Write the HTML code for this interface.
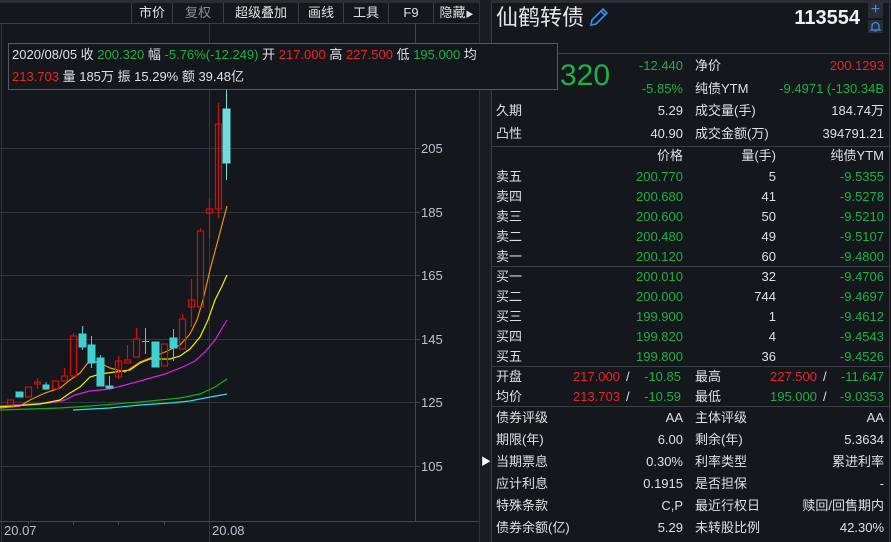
<!DOCTYPE html>
<html><head><meta charset="utf-8"><style>
*{margin:0;padding:0;box-sizing:border-box}
body{width:891px;height:542px;background:#14171c;overflow:hidden;position:relative;font-family:"Liberation Sans","Noto Sans CJK SC",sans-serif;color:#d8d8d8;font-size:13px}
.a{position:absolute;white-space:nowrap;line-height:16px}
.g{color:#1fb04a}.r{color:#e8262d}.w{color:#e0e0e0}
.R{text-align:right}
.hl{position:absolute;height:1px;background:#3a3d43}
.tb{position:absolute;top:3px;height:20px;border-left:1px solid #3a3d43;text-align:center;line-height:20px;font-size:13px;color:#e0e0e0}
</style></head><body>
<!-- top strip -->
<div style="position:absolute;left:0;top:0;width:891px;height:3px;background:#2a2d33"></div>
<div class="hl" style="left:0;top:23px;width:479px"></div>
<div class="tb" style="left:131px;width:41px">市价</div>
<div class="tb" style="left:172px;width:51px;color:#8a8d92">复权</div>
<div class="tb" style="left:223px;width:75px">超级叠加</div>
<div class="tb" style="left:298px;width:45px">画线</div>
<div class="tb" style="left:343px;width:45px">工具</div>
<div class="tb" style="left:388px;width:45px">F9</div>
<div class="tb" style="left:433px;width:46px">隐藏<span style="font-size:8px">▶</span></div>

<!-- chart -->
<svg style="position:absolute;left:0;top:0" width="480" height="542">
<g stroke="#33363c" stroke-width="1">
<line x1="0" y1="148.5" x2="415" y2="148.5"/><line x1="0" y1="212.5" x2="415" y2="212.5"/><line x1="0" y1="275.5" x2="415" y2="275.5"/><line x1="0" y1="339.5" x2="415" y2="339.5"/><line x1="0" y1="402.5" x2="415" y2="402.5"/><line x1="0" y1="466.5" x2="415" y2="466.5"/>
<line x1="209.5" y1="24" x2="209.5" y2="542"/>
<line x1="1.5" y1="24" x2="1.5" y2="542"/>
</g>
<g stroke="#44474d"><line x1="415.5" y1="24" x2="415.5" y2="521"/><line x1="0" y1="521.5" x2="479" y2="521.5"/>
<line x1="415" y1="148.5" x2="420" y2="148.5"/><line x1="415" y1="212.5" x2="420" y2="212.5"/><line x1="415" y1="275.5" x2="420" y2="275.5"/><line x1="415" y1="339.5" x2="420" y2="339.5"/><line x1="415" y1="402.5" x2="420" y2="402.5"/><line x1="415" y1="466.5" x2="420" y2="466.5"/>
<line x1="28.5" y1="521" x2="28.5" y2="525"/><line x1="73.5" y1="521" x2="73.5" y2="525"/><line x1="118.5" y1="521" x2="118.5" y2="525"/><line x1="164.5" y1="521" x2="164.5" y2="525"/></g>
<g fill="#b8c4d0" font-size="13" font-family="Liberation Sans,sans-serif">
<text x="421" y="153">205</text><text x="421" y="217">185</text><text x="421" y="280">165</text><text x="421" y="344">145</text><text x="421" y="407">125</text><text x="421" y="471">105</text>
<text x="4" y="535">20.07</text><text x="212" y="535">20.08</text></g>
<!-- MAs -->
<g fill="none" stroke-width="1.2">
<polyline stroke="#26e0e8" points="73,410 110,408 140,405 170,403 190,401 205,398 227,394"/>
<polyline stroke="#10b010" points="0,410 60,408 90,406 140,402 180,398 200,394 215,387 227,379"/>
<polyline stroke="#e020e0" points="0,406 50,403 65,400 75,395 90,391 110,389 140,381 165,374 185,366 195,361 205,352 215,340 227,320"/>
<polyline stroke="#f0f000" points="0,407 40,404 60,400 70,393 80,387 90,377 100,374 115,372 130,370 140,363 150,359 170,359 180,356 190,349 200,337 208,320 215,300 222,286 227,275"/>
<polyline stroke="#f09010" points="0,408 20,406 30,400 45,393 60,388 70,380 80,373 90,360 100,363 110,368 125,372 140,362 150,358 165,352 180,345 190,334 197,320 203,300 210,270 218,240 227,206"/>
</g>
<!-- candles -->
<g stroke="#d01010" fill="none" stroke-width="1.2">
<rect x="7.5" y="400" width="6" height="5"/>
<rect x="25.5" y="387" width="6" height="10"/>
<rect x="34.5" y="382" width="6" height="2"/><line x1="37.5" y1="378" x2="37.5" y2="389"/>
<rect x="52.5" y="381" width="6" height="8"/>
<rect x="61.5" y="376" width="6" height="5"/><line x1="64.5" y1="368" x2="64.5" y2="376"/>
<rect x="70.5" y="336" width="6" height="40"/><line x1="73.5" y1="333" x2="73.5" y2="336"/>
<rect x="115.5" y="361" width="6" height="16"/><line x1="118.5" y1="356" x2="118.5" y2="379"/>
<rect x="124.5" y="360" width="6" height="3"/><line x1="127.5" y1="345" x2="127.5" y2="360"/>
<rect x="133.5" y="339" width="6" height="18"/><line x1="136.5" y1="328" x2="136.5" y2="339"/>
<rect x="161.5" y="344" width="6" height="22"/>
<rect x="179.5" y="319" width="6" height="30"/><line x1="182.5" y1="314" x2="182.5" y2="319"/>
<rect x="188.5" y="300" width="6" height="7"/><line x1="191.5" y1="279" x2="191.5" y2="327"/>
<rect x="197.5" y="231" width="6" height="76"/><line x1="200.5" y1="228" x2="200.5" y2="231"/>
<rect x="206.5" y="209" width="6" height="4"/><line x1="209.5" y1="199" x2="209.5" y2="239"/>
<rect x="215.5" y="124" width="6" height="85"/><line x1="218.5" y1="103" x2="218.5" y2="218"/>
</g>
<g fill="#40d0d0" stroke="#40d0d0">
<rect x="16" y="392" width="7" height="5"/>
<rect x="43" y="385" width="6" height="4"/><line x1="46" y1="382" x2="46" y2="390"/>
<rect x="79" y="334" width="7" height="13"/><line x1="82.5" y1="326" x2="82.5" y2="350"/>
<rect x="88" y="345" width="7" height="18"/><line x1="91.5" y1="336" x2="91.5" y2="368"/>
<rect x="97" y="358" width="7" height="28"/><line x1="100.5" y1="355" x2="100.5" y2="358"/>
<rect x="106" y="386" width="7" height="2"/><line x1="109.5" y1="376" x2="109.5" y2="389"/>
<line x1="142" y1="341.5" x2="149" y2="341.5"/><line x1="145.5" y1="328" x2="145.5" y2="354"/>
<rect x="152" y="342" width="7" height="25"/>
<rect x="170" y="338" width="7" height="10"/><line x1="173.5" y1="329" x2="173.5" y2="361"/>
<rect x="223" y="109" width="7" height="54" fill="#70dcdc" stroke="#70dcdc"/><line x1="226.5" y1="88" x2="226.5" y2="180" stroke="#70dcdc"/>
</g>
</svg>

<!-- divider strip -->
<div style="position:absolute;left:479px;top:0;width:12px;height:542px;background:#1a1d22;border-left:1px solid #2e3137"></div>
<div class="a" style="left:481px;top:455px;font-size:10px;color:#fff">▶</div>

<!-- right panel -->
<div style="position:absolute;left:491px;top:3px;width:1px;height:539px;background:#3a3d43"></div>
<div style="position:absolute;left:889px;top:3px;width:1px;height:539px;background:#3a3d43"></div>
<div class="a" style="left:496px;top:4px;font-size:22px;line-height:28px;color:#e6e6e6">仙鹤转债</div>
<svg style="position:absolute;left:588px;top:6px" width="22" height="22" viewBox="0 0 22 22"><path d="M3 19 L4 14 L15 3 L19 7 L8 18 Z M13 5 L17 9" fill="none" stroke="#3c8ef0" stroke-width="1.6"/></svg>
<div class="a" style="left:760px;top:6px;width:100px;text-align:right;font-size:20px;line-height:24px;font-weight:bold;color:#f0f0f0">113554</div>
<div style="position:absolute;left:868px;top:3px;width:15px;height:15px;background:#2a2d33;color:#3c8ef0;font-size:16px;line-height:14px;text-align:center">+</div>
<div style="position:absolute;left:868px;top:20px;width:15px;height:13px;background:#2a2d33"><svg width="15" height="13"><path d="M3 10 L4 9 L4 5 Q7.5 0 11 5 L11 9 L12 10 Z M6.5 11 L8.5 11" fill="none" stroke="#3c8ef0" stroke-width="1.2"/></svg></div>

<div class="hl" style="left:491px;top:53px;width:398px"></div>
<div class="a" style="left:560px;top:58px;font-size:30px;line-height:36px" ><span class="g">320</span></div>
<div class="a g R" style="left:600px;top:58px;width:83px">-12.440</div>
<div class="a w" style="left:695px;top:58px">净价</div>
<div class="a r R" style="left:780px;top:58px;width:104px">200.1293</div>
<div class="a g R" style="left:600px;top:81px;width:83px">-5.85%</div>
<div class="a w" style="left:695px;top:81px">纯债YTM</div>
<div class="a g R" style="left:760px;top:81px;width:124px;overflow:hidden">-9.4971 (-130.34B</div>
<div class="a w" style="left:496px;top:103px">久期</div><div class="a w R" style="left:600px;top:103px;width:83px">5.29</div>
<div class="a w" style="left:695px;top:103px">成交量(手)</div><div class="a w R" style="left:780px;top:103px;width:104px">184.74万</div>
<div class="a w" style="left:496px;top:126px">凸性</div><div class="a w R" style="left:600px;top:126px;width:83px">40.90</div>
<div class="a w" style="left:695px;top:126px">成交金额(万)</div><div class="a w R" style="left:780px;top:126px;width:104px">394791.21</div>
<div class="hl" style="left:491px;top:146px;width:398px"></div>
<div class="a w R" style="left:600px;top:148px;width:83px">价格</div>
<div class="a w R" style="left:700px;top:148px;width:76px">量(手)</div>
<div class="a w R" style="left:780px;top:148px;width:104px">纯债YTM</div>

<div class="a w" style="left:496px;top:169px">卖五</div><div class="a g R" style="left:600px;top:169px;width:83px">200.770</div><div class="a w R" style="left:700px;top:169px;width:76px">5</div><div class="a g R" style="left:780px;top:169px;width:104px">-9.5355</div>
<div class="a w" style="left:496px;top:189px">卖四</div><div class="a g R" style="left:600px;top:189px;width:83px">200.680</div><div class="a w R" style="left:700px;top:189px;width:76px">41</div><div class="a g R" style="left:780px;top:189px;width:104px">-9.5278</div>
<div class="a w" style="left:496px;top:209px">卖三</div><div class="a g R" style="left:600px;top:209px;width:83px">200.600</div><div class="a w R" style="left:700px;top:209px;width:76px">50</div><div class="a g R" style="left:780px;top:209px;width:104px">-9.5210</div>
<div class="a w" style="left:496px;top:229px">卖二</div><div class="a g R" style="left:600px;top:229px;width:83px">200.480</div><div class="a w R" style="left:700px;top:229px;width:76px">49</div><div class="a g R" style="left:780px;top:229px;width:104px">-9.5107</div>
<div class="a w" style="left:496px;top:249px">卖一</div><div class="a g R" style="left:600px;top:249px;width:83px">200.120</div><div class="a w R" style="left:700px;top:249px;width:76px">60</div><div class="a g R" style="left:780px;top:249px;width:104px">-9.4800</div>
<div class="hl" style="left:491px;top:266px;width:398px"></div>
<div class="a w" style="left:496px;top:269px">买一</div><div class="a g R" style="left:600px;top:269px;width:83px">200.010</div><div class="a w R" style="left:700px;top:269px;width:76px">32</div><div class="a g R" style="left:780px;top:269px;width:104px">-9.4706</div>
<div class="a w" style="left:496px;top:289px">买二</div><div class="a g R" style="left:600px;top:289px;width:83px">200.000</div><div class="a w R" style="left:700px;top:289px;width:76px">744</div><div class="a g R" style="left:780px;top:289px;width:104px">-9.4697</div>
<div class="a w" style="left:496px;top:309px">买三</div><div class="a g R" style="left:600px;top:309px;width:83px">199.900</div><div class="a w R" style="left:700px;top:309px;width:76px">1</div><div class="a g R" style="left:780px;top:309px;width:104px">-9.4612</div>
<div class="a w" style="left:496px;top:329px">买四</div><div class="a g R" style="left:600px;top:329px;width:83px">199.820</div><div class="a w R" style="left:700px;top:329px;width:76px">4</div><div class="a g R" style="left:780px;top:329px;width:104px">-9.4543</div>
<div class="a w" style="left:496px;top:349px">买五</div><div class="a g R" style="left:600px;top:349px;width:83px">199.800</div><div class="a w R" style="left:700px;top:349px;width:76px">36</div><div class="a g R" style="left:780px;top:349px;width:104px">-9.4526</div>
<div class="hl" style="left:491px;top:366px;width:398px"></div>

<div class="a w" style="left:496px;top:369px">开盘</div><div class="a r R" style="left:540px;top:369px;width:80px">217.000</div><div class="a w" style="left:626px;top:369px">/</div><div class="a g R" style="left:630px;top:369px;width:51px">-10.85</div>
<div class="a w" style="left:695px;top:369px">最高</div><div class="a r R" style="left:740px;top:369px;width:77px">227.500</div><div class="a w" style="left:823px;top:369px">/</div><div class="a g R" style="left:830px;top:369px;width:54px">-11.647</div>
<div class="a w" style="left:496px;top:389px">均价</div><div class="a r R" style="left:540px;top:389px;width:80px">213.703</div><div class="a w" style="left:626px;top:389px">/</div><div class="a g R" style="left:630px;top:389px;width:51px">-10.59</div>
<div class="a w" style="left:695px;top:389px">最低</div><div class="a g R" style="left:740px;top:389px;width:77px">195.000</div><div class="a w" style="left:823px;top:389px">/</div><div class="a g R" style="left:830px;top:389px;width:54px">-9.0353</div>
<div class="hl" style="left:491px;top:406px;width:398px"></div>

<div class="a w" style="left:496px;top:410px">债券评级</div><div class="a w R" style="left:600px;top:410px;width:83px">AA</div><div class="a w" style="left:695px;top:410px">主体评级</div><div class="a w R" style="left:780px;top:410px;width:104px">AA</div>
<div class="a w" style="left:496px;top:432px">期限(年)</div><div class="a w R" style="left:600px;top:432px;width:83px">6.00</div><div class="a w" style="left:695px;top:432px">剩余(年)</div><div class="a w R" style="left:780px;top:432px;width:104px">5.3634</div>
<div class="a w" style="left:496px;top:454px">当期票息</div><div class="a w R" style="left:600px;top:454px;width:83px">0.30%</div><div class="a w" style="left:695px;top:454px">利率类型</div><div class="a w R" style="left:780px;top:454px;width:104px">累进利率</div>
<div class="a w" style="left:496px;top:476px">应计利息</div><div class="a w R" style="left:600px;top:476px;width:83px">0.1915</div><div class="a w" style="left:695px;top:476px">是否担保</div><div class="a w R" style="left:780px;top:476px;width:104px">-</div>
<div class="a w" style="left:496px;top:498px">特殊条款</div><div class="a w R" style="left:600px;top:498px;width:83px">C,P</div><div class="a w" style="left:695px;top:498px">最近行权日</div><div class="a w R" style="left:780px;top:498px;width:104px">赎回/回售期内</div>
<div class="a w" style="left:496px;top:520px">债券余额(亿)</div><div class="a w R" style="left:600px;top:520px;width:83px">5.29</div><div class="a w" style="left:695px;top:520px">未转股比例</div><div class="a w R" style="left:780px;top:520px;width:104px">42.30%</div>

<!-- tooltip -->
<div style="position:absolute;left:8px;top:43px;width:550px;height:47px;background:#14171c;border:1px solid #55585e"></div>
<div class="a w" style="left:12px;top:47px">2020/08/05 收 <span class="g">200.320</span> 幅 <span class="g">-5.76%(-12.249)</span> 开 <span class="r">217.000</span> 高 <span class="r">227.500</span> 低 <span class="g">195.000</span> 均</div>
<div class="a w" style="left:12px;top:69px"><span class="r">213.703</span> 量 185万 振 15.29% 额 39.48亿</div>
</body></html>
